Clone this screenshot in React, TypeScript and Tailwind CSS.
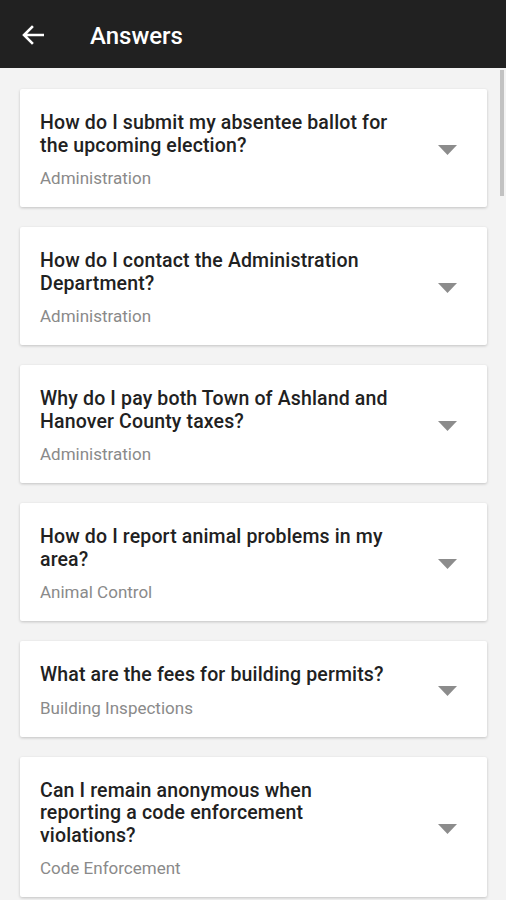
import React from 'react';

const answers = [
  { q: ['How do I submit my absentee ballot for', 'the upcoming election?'], dept: 'Administration' },
  { q: ['How do I contact the Administration', 'Department?'], dept: 'Administration' },
  { q: ['Why do I pay both Town of Ashland and', 'Hanover County taxes?'], dept: 'Administration' },
  { q: ['How do I report animal problems in my', 'area?'], dept: 'Animal Control' },
  { q: ['What are the fees for building permits?'], dept: 'Building Inspections' },
  { q: ['Can I remain anonymous when', 'reporting a code enforcement', 'violations?'], dept: 'Code Enforcement' },
];

const Caret = () => (
  <svg width="19" height="10" viewBox="0 0 19 10" className="shrink-0">
    <path d="M0 0 H19 L9.5 10 Z" fill="#8c8c8c" />
  </svg>
);

const App = () => {
  return (
    <div className="w-[506px] h-[900px] overflow-hidden bg-[#f3f3f3] flex flex-col font-['Roboto',_'Liberation_Sans',_sans-serif]">
      <header className="h-[68px] shrink-0 bg-[#212121] flex items-center px-[22px]">
        <svg width="22" height="20" viewBox="0 0 22 20" className="shrink-0 mt-[2px]">
          <path d="M21 10 H3 M10 2 L2 10 L10 18" fill="none" stroke="#fff" strokeWidth="2.6" strokeLinecap="square" />
        </svg>
        <h1 className="ml-[46px] mt-[3px] text-white text-[24px] font-medium">Answers</h1>
      </header>

      <div className="relative flex-1">
        <div className="absolute right-[2px] top-[2px] w-[4px] h-[126px] bg-[#c2c2c2]" />
        <ul className="flex flex-col gap-5 pt-[21px] pl-5 pr-[19px]">
          {answers.map((a, i) => (
            <li
              key={i}
              className="bg-white rounded-[2px] shadow-[0_1px_3px_rgba(0,0,0,0.2)] flex items-center pl-5 pr-[30px] pt-[23px] pb-[19px]"
            >
              <div className="flex-1">
                <p className="text-[19.5px] leading-[22.5px] font-medium tracking-[0.15px] text-[#212121]">
                  {a.q.map((line, j) => (
                    <span key={j} className="block whitespace-nowrap">
                      {line}
                    </span>
                  ))}
                </p>
                <p className="mt-[11px] text-[17px] leading-[20px] text-[#8a8a8a]">{a.dept}</p>
              </div>
              <Caret />
            </li>
          ))}
        </ul>
      </div>
    </div>
  );
};

export default App;
